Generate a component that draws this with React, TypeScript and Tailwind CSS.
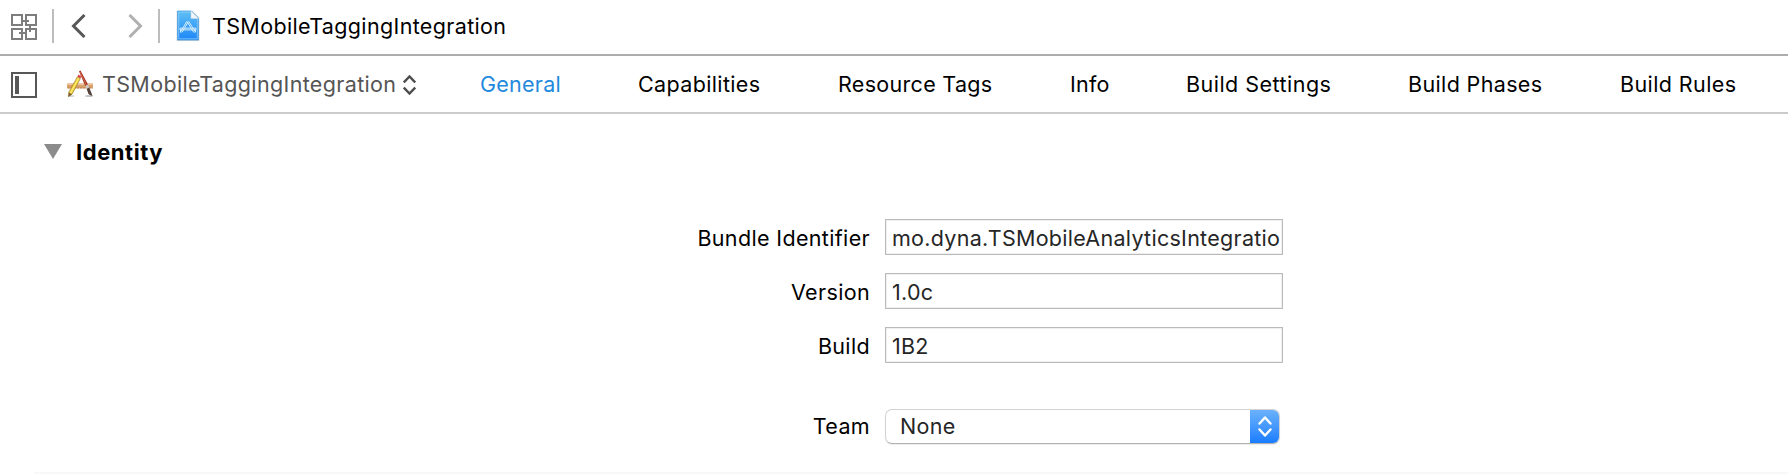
import React from "react";

function GridIcon() {
  return (
    <svg className="block h-[26px] w-[26px]" viewBox="0 0 26 26" fill="none" stroke="#7d7d7d" strokeWidth="2">
      <path d="M1 1h10v10H1zM15 1h10v10H15zM1 15h10v10H1zM15 15h10v10H15zM11 7h7M19 11v7M8 19h7" />
    </svg>
  );
}

function DocIcon() {
  return (
    <svg className="block h-[32px] w-[24px]" viewBox="0 0 24 32">
      <defs>
        <linearGradient id="doc" x1="0" y1="0" x2="0" y2="1">
          <stop offset="0" stopColor="#5fc0f3" />
          <stop offset="1" stopColor="#1d86f8" />
        </linearGradient>
      </defs>
      <path d="M.6 1h15.400l7.400 7v23H.6z" fill="#000" opacity=".16" />
      <path d="M1.500 1h14l7 7v22h-21z" fill="url(#doc)" stroke="#4b9fe0" strokeWidth=".8" />
      <path d="M2.700 2.200h12.400l6.200 6.300v20.300H2.700z" fill="none" stroke="#8dccfa" strokeWidth=".8" />
      <path d="M15 1l7.500 7.500H15z" fill="#f3f6f9" stroke="#c3d3df" strokeWidth=".6" />
      <g fill="none" stroke="#d4edff" strokeWidth="1">
        <path d="M12.400 11.500L6 22.300M10.800 11.500l-6 9.800v1.500M11 11.500l6.700 10.800M12.800 11.500l6.200 9.800v1.500M4 18.200h16v1.700H4zM4.500 20v2M19.500 20v2" />
      </g>
    </svg>
  );
}

function AppIcon() {
  return (
    <svg className="block h-[28px] w-[28px]" viewBox="0 0 28 28">
      <ellipse cx="5" cy="26" rx="3.500" ry="1" fill="#bbb" opacity=".6" />
      <ellipse cx="23" cy="26" rx="4" ry="1" fill="#aaa" opacity=".7" />
      <path d="M1 13.500h26v5H1z" fill="#d9a06c" />
      <path d="M1 13.500h26v1.500H1z" fill="#edc39a" />
      <path d="M3 17v1.500M6 17v1.500M9 17v1.500M12 17v1.500M15 17v1.500M18 17v1.500M21 17v1.500M24 17v1.500" stroke="#a86a38" strokeWidth=".7" />
      <path d="M13 1.200l1.500-.8 7.500 14-2.800 1.600z" fill="#a3321e" />
      <path d="M14 2l6.400 13" stroke="#d9755e" strokeWidth=".8" />
      <path d="M19.200 16l2.800-1.600 1.500 3-2.600 1.600z" fill="#c8c8c8" />
      <path d="M20.700 19l2.500-1.600 3.300 8.300c-2 0-3.500-1-4.300-2.500z" fill="#54403a" />
      <path d="M12.400 4.500l3 1.700-1 2.300-3-1.700z" fill="#e0444c" />
      <path d="M11.300 6.900l3 1.800L6 24.200l-3.500 2.300.3-4.300z" fill="#f5d33b" stroke="#8b6b22" strokeWidth=".6" />
      <path d="M12.500 8.500L4.500 23" stroke="#fff08a" strokeWidth="1" />
      <path d="M2.800 22.500L6 24.200l-3.500 2.500z" fill="#7b5a33" />
    </svg>
  );
}

const TABS = [
  { label: "General", box: "w-[158px] tracking-[0.25px] text-[#2389dc]" },
  { label: "Capabilities", box: "w-[200px] tracking-[0.36px]" },
  { label: "Resource Tags", box: "w-[232px] tracking-[0.3px]" },
  { label: "Info", box: "w-[116px] tracking-[0.2px]" },
  { label: "Build Settings", box: "w-[222px] tracking-[0.48px]" },
  { label: "Build Phases", box: "w-[212px] tracking-[0.36px]" },
  { label: "Build Rules", box: "w-[130px] tracking-[0.4px]" },
];

const FIELDS = [
  { label: "Bundle Identifier", value: "mo.dyna.TSMobileAnalyticsIntegratio" },
  { label: "Version", value: "1.0c" },
  { label: "Build", value: "1B2" },
];

export default function App() {
  return (
    <div className="flex h-[474px] w-[1788px] flex-col overflow-hidden bg-white font-['Inter',sans-serif] text-[21.5px] leading-[26px] tracking-[0.35px] whitespace-nowrap text-black">
      <header className="flex h-14 shrink-0 items-start border-b-2 border-[#adadad]">
        <div className="mt-[14px] ml-[11px]"><GridIcon /></div>
        <div className="mt-[9px] ml-[15px] h-[34px] w-[2px] bg-[#bdbdbd]" />
        <svg className="mt-[14px] ml-[17px] h-6 w-4" viewBox="0 0 16 24" fill="none" stroke="#575757" strokeWidth="3"><path d="M13.500 1L2.500 12l11 11" /></svg>
        <svg className="mt-[14px] ml-[41px] h-6 w-4" viewBox="0 0 16 24" fill="none" stroke="#b0b0b0" strokeWidth="3"><path d="M1.500 1l11 11-11 11" /></svg>
        <div className="mt-[9px] ml-[14px] h-[34px] w-[2px] bg-[#bdbdbd]" />
        <div className="mt-[10px] ml-4"><DocIcon /></div>
        <span className="mt-[13px] ml-3">TSMobileTaggingIntegration</span>
      </header>

      <nav className="flex h-[58px] shrink-0 items-start border-b-2 border-[#cbcbcb]">
        <svg className="mt-4 ml-[11px] h-[26px] w-[26px]" viewBox="0 0 26 26"><path d="M1 1h24v24H1z" fill="none" stroke="#575757" strokeWidth="2" /><path d="M4 4h4v18H4z" fill="#575757" /></svg>
        <div className="mt-[14px] ml-[29px]"><AppIcon /></div>
        <span className="mt-[15px] ml-2 w-[301px] text-[#555]">TSMobileTaggingIntegration</span>
        <svg className="mt-[19px] h-5 w-[13px]" viewBox="0 0 13 20" fill="none" stroke="#4d4d4d" strokeWidth="2.400"><path d="M.8 7.500l5.700-6 5.700 6M.8 12.500l5.700 6 5.700-6" /></svg>
        <div className="mt-[15px] ml-[64px] flex">
          {TABS.map((t) => (
            <span key={t.label} className={t.box}>{t.label}</span>
          ))}
        </div>
      </nav>

      <main className="flex flex-1 flex-col">
        <div className="flex h-[105px] items-start">
          <svg className="mt-[30px] ml-[44px] h-[15px] w-[18px]" viewBox="0 0 18 15"><path d="M0 0h18L9 15z" fill="#8c8c8c" /></svg>
          <h2 className="mt-[25px] ml-[14px] text-[22px] font-bold tracking-[0.55px]">Identity</h2>
        </div>
        <div className="flex flex-col gap-[18px]">
          {FIELDS.map((f) => (
            <label key={f.label} className="flex h-9 items-center">
              <span className="w-[870px] pt-[2px] text-right">{f.label}</span>
              <span className="ml-[15px] flex h-9 w-[398px] items-center overflow-hidden border border-[#bababa] pt-[2px] pl-[6px] tracking-[0.28px] text-[#262626] shadow-[inset_0_0_0_1px_#efefef]">{f.value}</span>
            </label>
          ))}
        </div>
        <div className="mt-[46px] flex h-[35px] items-center">
          <span className="w-[870px] pb-[2px] text-right">Team</span>
          <div className="ml-[15px] flex h-[35px] w-[395px] overflow-hidden rounded-[7px] border border-[#d2d2d2] border-b-[#b2b2b2] shadow-[0_1px_1px_#00000014]">
            <span className="flex flex-1 items-center pb-[2px] pl-[14px] text-[#262626]">None</span>
            <div className="-my-px -mr-px flex w-[30px] items-center justify-center bg-linear-to-b from-[#6cb3fa] to-[#147bff]">
              <svg className="h-[21px] w-[14px]" viewBox="0 0 14 21" fill="none" stroke="#fff" strokeWidth="2.400" strokeLinecap="round" strokeLinejoin="round"><path d="M1.500 7.500L7 1.500l5.500 6M1.500 13.500l5.500 6 5.500-6" /></svg>
            </div>
          </div>
        </div>
        <div className="mt-auto ml-[34px] h-[2px] bg-[#f8f8f8]" />
      </main>
    </div>
  );
}
